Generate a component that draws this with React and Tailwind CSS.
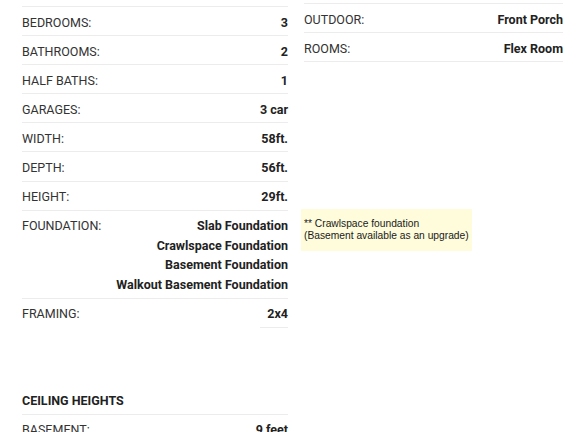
const LEFT = [
  ["BEDROOMS:", ["3"]],
  ["BATHROOMS:", ["2"]],
  ["HALF BATHS:", ["1"]],
  ["GARAGES:", ["3 car"]],
  ["WIDTH:", ["58ft."]],
  ["DEPTH:", ["56ft."]],
  ["HEIGHT:", ["29ft."]],
  ["FOUNDATION:", ["Slab Foundation", "Crawlspace Foundation", "Basement Foundation", "Walkout Basement Foundation"]],
]

const RIGHT = [
  ["OUTDOOR:", "Front Porch"],
  ["ROOMS:", "Flex Room"],
]

function Row({ label, values }) {
  return (
    <div className="flex justify-between border-b border-[#ececec] pt-[5.5px] pb-[3px] leading-[19.6px]">
      <span className="text-[#333]">{label}</span>
      <div className="flex flex-col items-end font-bold text-[#222]">
        {values.map((v) => (
          <span key={v}>{v}</span>
        ))}
      </div>
    </div>
  )
}

export default function App() {
  return (
    <div className="min-h-[432px] bg-white text-[12.5px] overflow-hidden" style={{ fontFamily: "Roboto, 'Liberation Sans', sans-serif" }}>
      <div className="flex gap-[16px] pl-[22px]">
        {/* Left column */}
        <div className="w-[266px] pt-[6px]">
          <div className="border-t border-[#ececec]">
            {LEFT.map(([label, values]) => (
              <Row key={label} label={label} values={values} />
            ))}
            <div className="flex justify-between leading-[19.6px]">
              <span className="pt-[5.5px] pb-[3px] text-[#333]">FRAMING:</span>
              <span className="border-b border-[#ececec] pt-[5.5px] pb-[3px] pl-[7px] font-bold text-[#222]">2x4</span>
            </div>
          </div>

          <div className="mt-[58px] border-b border-[#ececec] pt-[5px] pb-[3.5px] leading-[19.6px] font-bold text-[#222]">
            CEILING HEIGHTS
          </div>
          <Row label="BASEMENT:" values={["9 feet"]} />
        </div>

        {/* Right column */}
        <div className="w-[259px] pt-[3px]">
          <div className="border-t border-[#ececec]">
            {RIGHT.map(([label, value]) => (
              <Row key={label} label={label} values={[value]} />
            ))}
          </div>
          <div className="mt-[147px] -ml-[3px]">
            <div
              className="inline-block bg-[#fefcdb] px-[3px] py-[9px] text-[10.25px] leading-[12px] text-[#1a1a1a]"
              style={{ fontFamily: "'Liberation Sans', Arial, sans-serif" }}
            >
              ** Crawlspace foundation
              <br />
              (Basement available as an upgrade)
            </div>
          </div>
        </div>
      </div>
    </div>
  )
}
